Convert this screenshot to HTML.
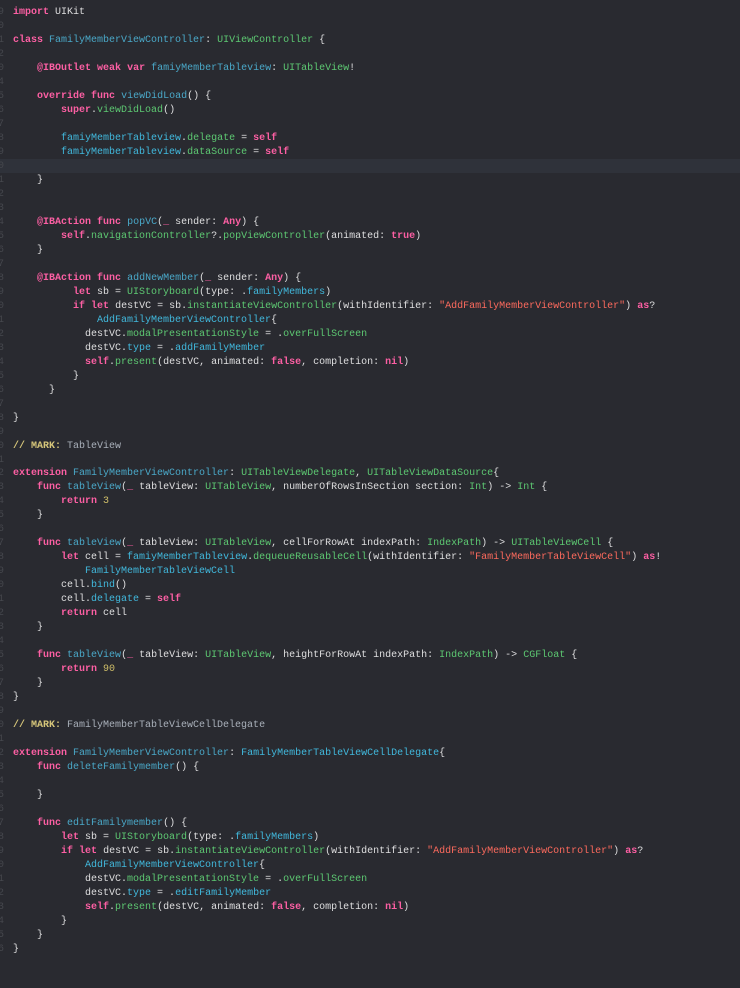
<!DOCTYPE html>
<html><head><meta charset="utf-8"><style>
html,body{margin:0;padding:0;background:#292a30;width:740px;height:988px;overflow:hidden}
.hl{position:absolute;left:0;top:159px;width:740px;height:14px;background:#2f323a}
.g{position:absolute;left:-5px;top:6px;font:10px/13.98px "Liberation Mono",monospace;color:#45474d;white-space:pre;width:9px;overflow:hidden;text-align:right}
pre{position:absolute;left:13px;top:6px;margin:0;font:10px/13.98px "Liberation Mono",monospace;color:#dfdfe0;white-space:pre}
.k{color:#fc5fa3;font-weight:bold}
.d{color:#4aa8c8}
.r{color:#41b8dc}
.t{color:#5dc872}
.s{color:#fc6a5d}
.n{color:#d0bf69}
.m{color:#d6c67a;font-weight:bold}
.c{color:#a9b0ba}
</style></head><body>
<div class="hl"></div>
<div class="g">9
0
1
2
0
4
5
6
7
8
9
0
1
2
3
4
5
6
7
8
9
0
1
2
3
4
5
6
7
8
9
0
1
2
3
4
5
6
7
8
9
0
1
2
3
4
5
6
7
8
9
0
1
2
3
4
5
6
7
8
9
0
1
2
3
4
5
6</div>
<pre><span class="k">import</span> UIKit

<span class="k">class</span> <span class="d">FamilyMemberViewController</span>: <span class="t">UIViewController</span> {

    <span class="k">@IBOutlet</span> <span class="k">weak</span> <span class="k">var</span> <span class="d">famiyMemberTableview</span>: <span class="t">UITableView</span>!

    <span class="k">override</span> <span class="k">func</span> <span class="d">viewDidLoad</span>() {
        <span class="k">super</span>.<span class="t">viewDidLoad</span>()

        <span class="r">famiyMemberTableview</span>.<span class="t">delegate</span> = <span class="k">self</span>
        <span class="r">famiyMemberTableview</span>.<span class="t">dataSource</span> = <span class="k">self</span>

    }


    <span class="k">@IBAction</span> <span class="k">func</span> <span class="d">popVC</span>(<span class="k">_</span> sender: <span class="k">Any</span>) {
        <span class="k">self</span>.<span class="t">navigationController</span>?.<span class="t">popViewController</span>(animated: <span class="k">true</span>)
    }

    <span class="k">@IBAction</span> <span class="k">func</span> <span class="d">addNewMember</span>(<span class="k">_</span> sender: <span class="k">Any</span>) {
          <span class="k">let</span> sb = <span class="t">UIStoryboard</span>(type: .<span class="r">familyMembers</span>)
          <span class="k">if</span> <span class="k">let</span> destVC = sb.<span class="t">instantiateViewController</span>(withIdentifier: <span class="s">"AddFamilyMemberViewController"</span>) <span class="k">as</span>?
              <span class="r">AddFamilyMemberViewController</span>{
            destVC.<span class="t">modalPresentationStyle</span> = .<span class="t">overFullScreen</span>
            destVC.<span class="r">type</span> = .<span class="r">addFamilyMember</span>
            <span class="k">self</span>.<span class="t">present</span>(destVC, animated: <span class="k">false</span>, completion: <span class="k">nil</span>)
          }
      }

}

<span class="m">// MARK:</span> <span class="c">TableView</span>

<span class="k">extension</span> <span class="d">FamilyMemberViewController</span>: <span class="t">UITableViewDelegate</span>, <span class="t">UITableViewDataSource</span>{
    <span class="k">func</span> <span class="d">tableView</span>(<span class="k">_</span> tableView: <span class="t">UITableView</span>, numberOfRowsInSection section: <span class="t">Int</span>) -&gt; <span class="t">Int</span> {
        <span class="k">return</span> <span class="n">3</span>
    }

    <span class="k">func</span> <span class="d">tableView</span>(<span class="k">_</span> tableView: <span class="t">UITableView</span>, cellForRowAt indexPath: <span class="t">IndexPath</span>) -&gt; <span class="t">UITableViewCell</span> {
        <span class="k">let</span> cell = <span class="r">famiyMemberTableview</span>.<span class="t">dequeueReusableCell</span>(withIdentifier: <span class="s">"FamilyMemberTableViewCell"</span>) <span class="k">as</span>!
            <span class="r">FamilyMemberTableViewCell</span>
        cell.<span class="r">bind</span>()
        cell.<span class="r">delegate</span> = <span class="k">self</span>
        <span class="k">return</span> cell
    }

    <span class="k">func</span> <span class="d">tableView</span>(<span class="k">_</span> tableView: <span class="t">UITableView</span>, heightForRowAt indexPath: <span class="t">IndexPath</span>) -&gt; <span class="t">CGFloat</span> {
        <span class="k">return</span> <span class="n">90</span>
    }
}

<span class="m">// MARK:</span> <span class="c">FamilyMemberTableViewCellDelegate</span>

<span class="k">extension</span> <span class="d">FamilyMemberViewController</span>: <span class="r">FamilyMemberTableViewCellDelegate</span>{
    <span class="k">func</span> <span class="d">deleteFamilymember</span>() {

    }

    <span class="k">func</span> <span class="d">editFamilymember</span>() {
        <span class="k">let</span> sb = <span class="t">UIStoryboard</span>(type: .<span class="r">familyMembers</span>)
        <span class="k">if</span> <span class="k">let</span> destVC = sb.<span class="t">instantiateViewController</span>(withIdentifier: <span class="s">"AddFamilyMemberViewController"</span>) <span class="k">as</span>?
            <span class="r">AddFamilyMemberViewController</span>{
            destVC.<span class="t">modalPresentationStyle</span> = .<span class="t">overFullScreen</span>
            destVC.<span class="r">type</span> = .<span class="r">editFamilyMember</span>
            <span class="k">self</span>.<span class="t">present</span>(destVC, animated: <span class="k">false</span>, completion: <span class="k">nil</span>)
        }
    }
}</pre>
</body></html>
